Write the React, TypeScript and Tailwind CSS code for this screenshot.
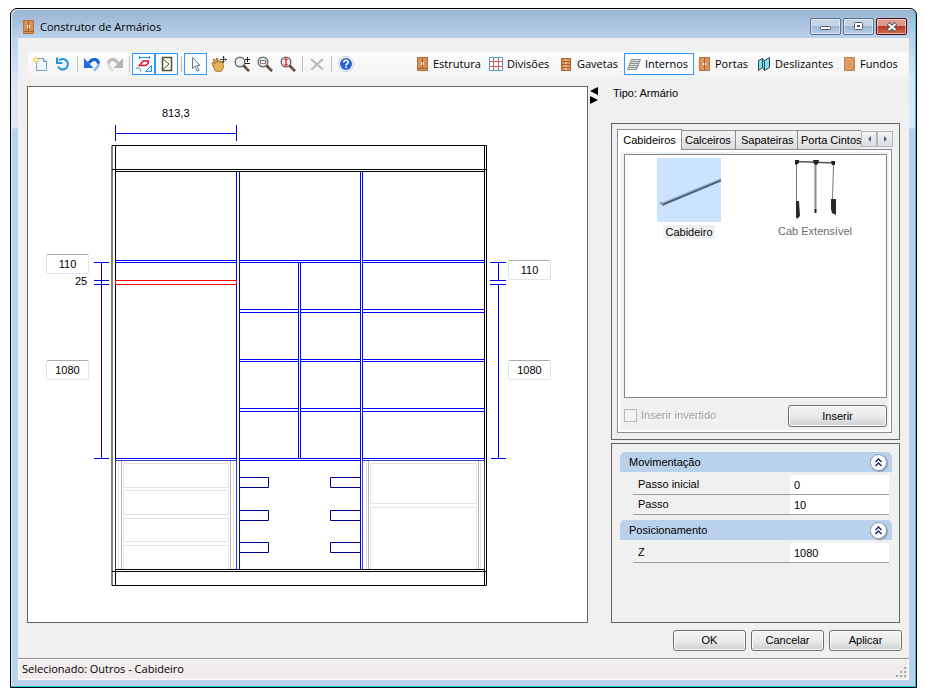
import { useState, type ReactNode } from 'react';

const SEGOE = "font-['Open_Sans','Noto_Sans',sans-serif]";
const SANS = "font-['Liberation_Sans',Arial,sans-serif]";

/* ---------- toolbar icons ---------- */

function Icon({ children }: { children: ReactNode }) {
  return (
    <svg width="16" height="16" viewBox="0 0 16 16" fill="none" className="shrink-0" aria-hidden="true">
      {children}
    </svg>
  );
}

const NewIcon = () => (
  <Icon>
    <path d="M4.500 2.500h7l3 3v9h-10z" fill="#eef5ff" stroke="#7d9fd0" />
    <path d="M11.500 2.500v3h3" stroke="#6d92c8" fill="#cfe0f6" />
    <path d="M4 .5v7M.5 4h7M1.500 1.500l5 5M6.500 1.500l-5 5" stroke="#f2cf3c" />
    <circle cx="4" cy="4" r="1.500" fill="#fff3a0" />
  </Icon>
);
const RefreshIcon = () => (
  <Icon>
    <path d="M4 4.500A5.200 5.200 0 1 1 3 10.500" stroke="#1e93e4" strokeWidth="2" />
    <path d="M2 1.500v5.500h5.500" stroke="#1e93e4" strokeWidth="2" />
  </Icon>
);
const UndoIcon = () => (
  <Icon>
    <path d="M5 7C8 2 14 2.500 14.500 7c.3 3-1.500 5-4.500 7.500" stroke="#8fb4ea" strokeWidth="2.500" />
    <path d="M5 7C8 2 14 2.500 14.500 7.500" stroke="#1765cf" strokeWidth="3" />
    <path d="M0 2v10h9.500z" fill="#1f6fd6" />
  </Icon>
);
const RedoIcon = () => (
  <Icon>
    <path d="M11 7C8 2 2 2.500 1.500 7c-.3 3 1.500 5 4.500 7.500" stroke="#dcdcdc" strokeWidth="2.500" />
    <path d="M11 7C8 2 2 2.500 1.500 7.500" stroke="#bcbcbc" strokeWidth="3" />
    <path d="M16 2v10H6.500z" fill="#b4b4b4" />
  </Icon>
);
const DimensionIcon = () => (
  <Icon>
    <path d="M3.500 0v3M13.500 0v3M3.500 1.500h10" stroke="#1e93e4" />
    <path d="M3.500 9.500l3.500-4.500h5.500l-.5 2.500-2.500 2z" stroke="#e01030" strokeWidth="1.500" />
    <path d="M0 12.500c3-1.500 5 0 4.500 3M9.500 15.500h6v-6z" stroke="#1e93e4" />
  </Icon>
);
const DoorOpenIcon = () => (
  <Icon>
    <path d="M3.500 1.500h9v13h-9z" stroke="#4a5426" strokeWidth="1.500" />
    <path d="M4 3l6 5-6 5.500" stroke="#4a5426" />
  </Icon>
);
const PointerIcon = () => (
  <Icon>
    <path d="M4.500 1.500v11l2.500-2.500 2.200 5 1.800-.8-2.200-4.700H12z" fill="#fff" stroke="#65758f" />
  </Icon>
);
const HandIcon = () => (
  <Icon>
    <path
      d="M1 7l1-1 3 2-3-4 1-1 4 4-2-4.500 1-.5 3.500 5 .5-2 1.500.5 1 5-1.500 4-3 1.500-4-1.500z"
      fill="#e7b35c"
      stroke="#a5702c"
    />
    <path d="M12.500 0v7M9 3.500h7" stroke="#444" />
    <path d="M11.500 1.500l1-1 1 1M11.500 5.500l1 1 1-1M14.500 2.500l1 1-1 1" stroke="#444" />
  </Icon>
);
function Lens({ children }: { children: ReactNode }) {
  return (
    <Icon>
      <path d="M9.500 9.500l5.500 5.500" stroke="#4b3b30" strokeWidth="2.500" />
      <path d="M11.500 11l3 3" stroke="#c09050" />
      <circle cx="6" cy="6" r="4.800" fill="#e6f0f2" stroke="#707070" strokeWidth="1.500" />
      {children}
    </Icon>
  );
}
const ZoomIcon = () => (
  <Lens>
    <path d="M11 3.500h5M13.500 1v5M11 7.500h5" stroke="#222" />
  </Lens>
);
const ZoomWindowIcon = () => (
  <Lens>
    <path d="M3.500 4.500h5v3h-5z" stroke="#666" fill="#fff" />
    <path d="M3.500 7.500h4" stroke="#d66" />
  </Lens>
);
const ZoomFitIcon = () => (
  <Lens>
    <path d="M6 2v8M4.500 4L6 2.500 7.500 4M4.500 8L6 9.500 7.500 8" stroke="#e84848" strokeWidth="1.500" />
  </Lens>
);
const DeleteIcon = () => (
  <Icon>
    <path d="M2 3l12 10.500M14 3L2.500 13.500" stroke="#b8b8b8" strokeWidth="2" />
  </Icon>
);
const HelpIcon = () => (
  <Icon>
    <circle cx="8" cy="8" r="7.500" fill="#fff" stroke="#c3cbe0" />
    <circle cx="8" cy="8" r="6" fill="#2c62cf" />
    <path d="M5.800 6.500C5.800 3.500 10.400 3.700 10.300 6.300 10.200 7.800 8 7.800 8 9.500" stroke="#fff" strokeWidth="1.600" />
    <path d="M7.200 10.500h1.700V12H7.200z" fill="#fff" />
  </Icon>
);
const CabinetIcon = () => (
  <Icon>
    <path d="M3 1h11v14H3z" fill="#d98f58" />
    <path d="M3.500 1.500h10v13h-10z" stroke="#b4713c" />
    <path d="M8.500 2v10M3 12.500h11" stroke="#a8632f" />
    <path d="M7 6h1v3H7zM9 6h1v3H9z" fill="#fff" />
  </Icon>
);
const GridIcon = () => (
  <Icon>
    <path d="M5.500 2v12M10.500 2v12M2 5.500h12M2 10.500h12" stroke="#e0605c" />
    <path d="M1.500 1.500h13v13h-13z" stroke="#4f9fdb" />
  </Icon>
);
const DrawersIcon = () => (
  <Icon>
    <path d="M3 2h10v13H3z" fill="#dc9259" />
    <path d="M3.500 2.500h9v12h-9zM3 5.500h10M3 8.500h10M3 11.500h10" stroke="#a8632f" />
    <path d="M7 4h2M7 7h2M7 10h2M7 13h2" stroke="#f6e2d0" />
  </Icon>
);
const ShelvesIcon = () => (
  <Icon>
    <path
      d="M5.500 3.500h9l-4 10h-9zM5 5.500h9M4 7.500h9M3.500 9.500h9M2.500 11.500h9"
      stroke="#8c8c8c"
      fill="#e4e4e4"
    />
  </Icon>
);
const DoorsIcon = () => (
  <Icon>
    <path d="M3.500 1.500h10v13h-10z" fill="#dc9462" stroke="#b4713c" />
    <path d="M8.500 2v12" stroke="#a8632f" />
    <path d="M7 7h1v2H7zM9 7h1v2H9z" fill="#fff" />
  </Icon>
);
const SlidingIcon = () => (
  <Icon>
    <path d="M2.500 4.500l4-2v9l-4 3zM8.500 4.500l5-3v10l-5 3zM6.500 3l2 1.500v10l-2-3" fill="#7fe0f4" stroke="#2c444c" />
  </Icon>
);
const BackIcon = () => (
  <Icon>
    <path d="M3.500 1.500h10v13h-10z" fill="#dc9a68" stroke="#c08050" />
  </Icon>
);

/* ---------- toolbar ---------- */

function ToolButton({ label, on, children }: { label: string; on?: boolean; children: ReactNode }) {
  return (
    <button
      type="button"
      aria-label={label}
      aria-pressed={on}
      className={`flex h-[22px] w-[23px] shrink-0 items-center justify-center border ${
        on ? 'border-[#3399ff] bg-[#fbfcfe]' : 'border-transparent'
      }`}
    >
      {children}
    </button>
  );
}

const Separator = () => (
  <span className="flex w-[6px] shrink-0 justify-center pl-px">
    <span className="h-4 w-px bg-[#c0c0c0]" />
  </span>
);

const SECTIONS = [
  { name: 'Estrutura', icon: <CabinetIcon />, width: 'w-[74px]' },
  { name: 'Divisões', icon: <GridIcon />, width: 'w-[70px]' },
  { name: 'Gavetas', icon: <DrawersIcon />, width: 'w-[68px]' },
  { name: 'Internos', icon: <ShelvesIcon />, width: 'w-[70px]' },
  { name: 'Portas', icon: <DoorsIcon />, width: 'w-[60px]' },
  { name: 'Deslizantes', icon: <SlidingIcon />, width: 'w-[85px]' },
  { name: 'Fundos', icon: <BackIcon />, width: 'w-[67px]' },
];

function Toolbar() {
  const [section, setSection] = useState('Internos');
  return (
    <div
      role="toolbar"
      className={`mr-px ml-[10px] flex h-[26px] shrink-0 items-start justify-between rounded-r-sm bg-linear-to-b from-[#fcfcfc] to-[#f3f3f3] pt-px pr-[2px] ${SEGOE}`}
    >
      <div className="flex items-center">
        <ToolButton label="Novo"><NewIcon /></ToolButton>
        <ToolButton label="Atualizar"><RefreshIcon /></ToolButton>
        <Separator />
        <ToolButton label="Desfazer"><UndoIcon /></ToolButton>
        <ToolButton label="Refazer"><RedoIcon /></ToolButton>
        <Separator />
        <ToolButton label="Cotas" on><DimensionIcon /></ToolButton>
        <ToolButton label="Abertura" on><DoorOpenIcon /></ToolButton>
        <Separator />
        <ToolButton label="Selecionar" on><PointerIcon /></ToolButton>
        <ToolButton label="Mover"><HandIcon /></ToolButton>
        <ToolButton label="Zoom"><ZoomIcon /></ToolButton>
        <ToolButton label="Zoom janela"><ZoomWindowIcon /></ToolButton>
        <ToolButton label="Zoom total"><ZoomFitIcon /></ToolButton>
        <Separator />
        <ToolButton label="Excluir"><DeleteIcon /></ToolButton>
        <Separator />
        <ToolButton label="Ajuda"><HelpIcon /></ToolButton>
      </div>
      <div className="flex items-center">
        {SECTIONS.map((s) => (
          <button
            key={s.name}
            type="button"
            onClick={() => setSection(s.name)}
            className={`flex h-[22px] items-center gap-[3px] border pl-px text-[11px] whitespace-nowrap text-black ${s.width} ${
              section === s.name ? 'border-[#3399ff] bg-[#fbfcfe]' : 'border-transparent'
            }`}
          >
            {s.icon}
            {s.name}
          </button>
        ))}
      </div>
    </div>
  );
}

/* ---------- cabinet drawing ---------- */

function Measure({ label, value, place }: { label: string; value: string; place: string }) {
  return (
    <input
      aria-label={label}
      defaultValue={value}
      className={`absolute h-5 w-[43px] rounded-xs border border-[#e2e3ea] border-t-[#abadb3] bg-white text-center text-[11px] text-black outline-none ${place}`}
    />
  );
}

const SHELVES = [309, 312, 359, 361, 408, 411];
const DRAWERS = [
  [463, 24],
  [490, 24],
  [518, 23],
  [545, 24],
];

function Cabinet() {
  return (
    <div className="relative h-[535px] w-[559px] shrink-0">
      <svg width="559" height="535" viewBox="28 87 559 535" className="block" role="img" aria-label="Armário">
        <g transform="translate(.5 .5)" fill="none" strokeLinecap="square">
          {/* drawers */}
          <g stroke="#e2e2e2">
            <path d="M118 461v107M233 461v107M366 461v107M480 461v107" />
            {DRAWERS.map(([y, h]) => (
              <rect key={y} x="123" y={y} width="105" height={h} />
            ))}
            <rect x="370" y="463" width="106" height="40" />
            <rect x="370" y="507" width="106" height="62" />
          </g>
          <path d="M121 461v107M230 461v107M368 461v107M478 461v107" stroke="#b4b4b4" />

          {/* structure */}
          <path
            d="M112 145H486V585H112zM115 145V585M484 145V585M112 169H486M115 171H484M115 569H484M112 571H486"
            stroke="#000"
          />

          {/* dividers and shelves */}
          <g stroke="#0000ff">
            <path d="M236 172V568M239 172V568M360 172V568M362 172V568M298 262V458M300 262V458" />
            {[260, 262, 458, 460].map((y) => (
              <path key={y} d={`M115 ${y}H236M239 ${y}H360M362 ${y}H484`} />
            ))}
            {SHELVES.map((y) => (
              <path key={y} d={`M239 ${y}H298M300 ${y}H360M362 ${y}H484`} />
            ))}
          </g>
          <path d="M236 461V568M362 461V568M115 460H236M362 460H484" stroke="#4040c8" />
          <path d="M115 461V568M484 461V568" stroke="#404040" />

          {/* tie racks */}
          <g stroke="#000090">
            {[477, 510, 542].map((y) => (
              <path key={y} d={`M239 ${y}h29v10h-29M360 ${y}h-30v10h30`} />
            ))}
          </g>

          {/* selected rail */}
          <rect x="115" y="280" width="121" height="4" stroke="#ff0000" />

          {/* dimension lines */}
          <path
            d="M115 125v15M236 125v15M115 133H236M101 262V458M94 262h14M94 280h14M94 284h14M94 458h14M498 262V280M498 284V458M490 262h15M490 280h15M490 284h15M491 458h14"
            stroke="#0000e0"
          />
        </g>
      </svg>
      <span className="absolute top-[19px] left-[134px] text-[11px] leading-[14px]">813,3</span>
      <span className="absolute top-[187px] left-[47px] text-[11px] leading-[14px]">25</span>
      <Measure label="Distância superior esquerda" value="110" place="top-[167px] left-[18px]" />
      <Measure label="Distância inferior esquerda" value="1080" place="top-[273px] left-[18px]" />
      <Measure label="Distância superior direita" value="110" place="top-[173px] left-[480px]" />
      <Measure label="Distância inferior direita" value="1080" place="top-[273px] left-[480px]" />
    </div>
  );
}

/* ---------- side panels ---------- */

const RailPicture = () => (
  <svg width="64" height="64" viewBox="0 0 64 64" className="block bg-[#cbe3ff]" aria-hidden="true">
    <path d="M5 45.500L64 21" stroke="#a3bdd6" strokeWidth="2" />
    <path d="M5 47L64 22.500" stroke="#4b6178" strokeWidth="2" />
    <path d="M3 44.500l3 2" stroke="#7d94aa" strokeWidth="2" />
  </svg>
);

const PullDownPicture = () => (
  <svg width="64" height="64" viewBox="0 0 64 64" className="block" fill="none" aria-hidden="true">
    <path d="M13 3.500L51 5" stroke="#555" strokeWidth="1.500" />
    <path d="M13.500 5v38M50.500 6L49.500 42" stroke="#777" />
    <path d="M32.500 5v47" stroke="#8b8b8b" strokeWidth="2" />
    <path d="M12 2h4v3l-3 2-1-1zM30 2h6l-1 4-2 1-2-1zM48 3h4v4h-3z" fill="#222" />
    <path d="M13 43h3l1 15-3 3-1-2zM48 41h5v16l-4-2-1-4z" fill="#26282b" />
    <path d="M31.500 51h2v4h-2z" fill="#222" />
  </svg>
);

const TAB = 'h-[19px] shrink-0 border-t border-[#898c95] bg-linear-to-b from-[#f3f3f3] to-[#dcdcdc] text-left whitespace-nowrap';
const PUSH = 'rounded-[3px] border border-[#707070] bg-linear-to-b from-[#f3f3f3] from-0% via-[#ebebeb] via-50% to-[#cfcfcf] text-[11px] text-black shadow-[inset_0_0_0_1px_#fafafa]';

function ScrollButton({ label, path }: { label: string; path: string }) {
  return (
    <button
      type="button"
      aria-label={label}
      className="flex h-4 w-4 shrink-0 items-center justify-center border border-[#b5b5bd] bg-linear-to-b from-[#f4f4f4] to-[#dedee2]"
    >
      <svg width="5" height="6" viewBox="0 0 5 6" aria-hidden="true">
        <path d={path} fill="#4a5f9e" />
      </svg>
    </button>
  );
}

function AccessoryPanel() {
  return (
    <section className="flex h-[317px] shrink-0 flex-col border border-[#646464] px-[5px] pt-[5px] pb-[6px] text-[11px]">
      <div className="flex items-end pr-px">
        <div role="tablist" className="flex min-w-0 flex-1 items-end">
          <button
            type="button"
            role="tab"
            aria-selected="true"
            className="relative z-10 -mb-px h-[21px] w-[65px] shrink-0 border border-b-0 border-[#898c95] bg-white"
          >
            Cabideiros
          </button>
          <button type="button" role="tab" className={`${TAB} w-[54px] border-r pl-[3px]`}>Calceiros</button>
          <button type="button" role="tab" className={`${TAB} w-[62px] border-r pl-[5px]`}>Sapateiras</button>
          <button type="button" role="tab" className={`${TAB} w-[63px] pl-[3px]`}>Porta Cintos</button>
        </div>
        <div className="flex self-start pt-[2px]">
          <ScrollButton label="Abas anteriores" path="M4 0v6L1 3z" />
          <ScrollButton label="Próximas abas" path="M1 0v6l3-3z" />
        </div>
      </div>
      <div className="mr-[2px] flex flex-1 flex-col border border-[#898c95] bg-white p-[2px]">
        <div className="flex flex-1 flex-col bg-[#f0f0f0] pt-[2px] pr-[2px] pb-[3px] pl-1">
          <div className="grid flex-1 grid-cols-[126px_126px] content-start border border-[#828790] bg-white pt-[3px] pl-px">
            <figure className="flex flex-col items-center gap-[3px]">
              <RailPicture />
              <figcaption className="bg-[#f0f0f0] px-[2px] leading-[14px]">Cabideiro</figcaption>
            </figure>
            <figure className="flex flex-col items-center gap-[2px]">
              <PullDownPicture />
              <figcaption className="leading-[14px] text-[#6d6d6d]">Cab Extensível</figcaption>
            </figure>
          </div>
          <div className="mt-[7px] flex items-start justify-between">
            <label className="flex items-center gap-1 pt-[2px] text-[#a0a0a0] [text-shadow:1px_1px_0_#fff]">
              <input
                type="checkbox"
                disabled
                className="m-0 h-[13px] w-[13px] appearance-none border border-[#b8b8b8] bg-[#f4f4f4]"
              />
              Inserir invertido
            </label>
            <button type="button" className={`h-[22px] w-[99px] ${PUSH}`}>Inserir</button>
          </div>
        </div>
      </div>
    </section>
  );
}

function GroupHeader({ title }: { title: string }) {
  return (
    <h2 className="flex h-5 items-center justify-between rounded-t-[5px] bg-[#b9d1ea] pr-[5px] pl-[9px]">
      {title}
      <button
        type="button"
        aria-label={`Recolher ${title}`}
        className="flex h-[17px] w-[17px] items-center justify-center rounded-full border border-[#8e9bb5] bg-white shadow-[1px_1px_1px_#8e9bb5]"
      >
        <svg width="9" height="9" viewBox="0 0 9 9" fill="none" stroke="#1c2f66" strokeWidth="1.500" aria-hidden="true">
          <path d="M1.500 4l3-3 3 3M1.500 8l3-3 3 3" />
        </svg>
      </button>
    </h2>
  );
}

function Property({ label, value }: { label: string; value: string }) {
  return (
    <label className="mr-[3px] ml-[13px] flex h-5 items-stretch border-b border-[#a0a0a0]">
      <span className="flex flex-1 items-center pl-[5px]">{label}</span>
      <input defaultValue={value} className="h-[19px] w-[99px] bg-white pl-1 text-[11px] text-black outline-none" />
    </label>
  );
}

function PropertyPanel() {
  return (
    <section className="flex-1 border border-[#646464] pt-2 pr-[7px] pl-2 text-[11px]">
      <GroupHeader title="Movimentação" />
      <div className="pt-[3px] pb-[5px]">
        <Property label="Passo inicial" value="0" />
        <Property label="Passo" value="10" />
      </div>
      <GroupHeader title="Posicionamento" />
      <div className="pt-[3px]">
        <Property label="Z" value="1080" />
      </div>
    </section>
  );
}

/* ---------- window ---------- */

const CAPTION = 'flex h-[17px] w-[31px] items-center justify-center rounded-[2px] border shadow-[inset_0_0_0_1px_rgba(255,255,255,.5)]';
const CAPTION_BLUE = 'border-[#5c6f88] bg-linear-to-b from-[#c5d5e8] from-50% via-[#9fb7d3] via-50% to-[#b8cfe8]';

export default function App() {
  return (
    <div className={`flex h-screen min-h-[699px] bg-white pt-2 pr-2 pb-[11px] pl-[10px] text-black ${SANS}`}>
      <div className="flex min-w-0 flex-1 flex-col rounded-t-[7px] border border-black bg-[linear-gradient(to_bottom,#99b4d1_0,#b9d1ea_28px,#d9e6f5_70px,#dce8f6_119px,#b9d1ea_120px)] px-[7px] pb-[7px] shadow-[inset_-1px_-1px_0_#2fc4dc,inset_1px_1px_0_#e4edf7]">
        <header className="flex h-[29px] shrink-0 items-start justify-between pt-[9px] pr-[2px] pl-[2px]">
          <div className="flex items-center gap-[4px]">
            <CabinetIcon />
            <h1 className={`text-[11px] leading-[17px] ${SEGOE}`}>Construtor de Armários</h1>
          </div>
          <div className="flex gap-[2px]">
            <button type="button" aria-label="Minimizar" className={`${CAPTION} ${CAPTION_BLUE}`}>
              <svg width="11" height="9" viewBox="0 0 11 9" aria-hidden="true">
                <rect x=".5" y="4.500" width="10" height="3" rx="1" fill="#fff" stroke="#535666" />
              </svg>
            </button>
            <button type="button" aria-label="Maximizar" className={`${CAPTION} ${CAPTION_BLUE}`}>
              <svg width="11" height="9" viewBox="0 0 11 9" aria-hidden="true">
                <rect x="1.500" y=".5" width="8" height="7" rx="1" fill="#fff" stroke="#535666" />
                <rect x="4.500" y="3.500" width="2" height="1" fill="#9fb7d3" stroke="#535666" />
              </svg>
            </button>
            <button
              type="button"
              aria-label="Fechar"
              className={`${CAPTION} border-[#4c1420] bg-linear-to-b from-[#dc9a8e] from-50% via-[#b83c28] via-50% to-[#d46a4c]`}
            >
              <svg width="12" height="10" viewBox="0 0 12 10" aria-hidden="true">
                <path d="M2 1.500l8 7M10 1.500l-8 7" stroke="#535666" strokeWidth="4" />
                <path d="M2.500 2l7 6M9.500 2l-7 6" stroke="#fff" strokeWidth="2" />
              </svg>
            </button>
          </div>
        </header>

        <main className="flex min-h-0 flex-1 flex-col bg-[#f0f0f0] pt-[14px]">
          <Toolbar />

          <div className="mt-2 ml-[9px] flex min-h-0 flex-1">
            <div className="flex min-w-0 flex-1 items-center justify-center overflow-hidden border border-[#646464] bg-white">
              <Cabinet />
            </div>
            <div className="flex w-[23px] shrink-0 flex-col items-start pl-[2px]">
              <svg width="8" height="18" viewBox="0 0 8 18" aria-hidden="true">
                <path d="M8 1v8L0 5zM0 10v8l8-4z" fill="#000" />
              </svg>
            </div>
            <aside className="mr-[9px] flex w-[289px] shrink-0 flex-col gap-[3px]">
              <p className="h-[34px] pl-[2px] text-[11px] leading-[14px]">Tipo: Armário</p>
              <AccessoryPanel />
              <PropertyPanel />
            </aside>
          </div>

          <div className="flex shrink-0 justify-end gap-[5px] py-[7px] pr-[7px]">
            <button type="button" className={`h-[21px] w-[73px] ${PUSH}`}>OK</button>
            <button type="button" className={`h-[21px] w-[73px] ${PUSH}`}>Cancelar</button>
            <button type="button" className={`h-[21px] w-[73px] ${PUSH}`}>Aplicar</button>
          </div>
        </main>

        <footer
          className={`flex h-[22px] shrink-0 items-center justify-between border-t border-[#919191] bg-[#f1edec] pr-[2px] pl-1 text-[11px] shadow-[inset_0_0_0_1px_#fff] ${SEGOE}`}
        >
          <span>Selecionado: Outros - Cabideiro</span>
          <svg width="11" height="11" viewBox="0 0 11 11" className="mb-[2px] self-end" aria-hidden="true">
            <path d="M8 0h2v2H8zM4 4h2v2H4zM8 4h2v2H8zM0 8h2v2H0zM4 8h2v2H4zM8 8h2v2H8z" fill="#a5a5a5" />
          </svg>
        </footer>
      </div>
    </div>
  );
}
